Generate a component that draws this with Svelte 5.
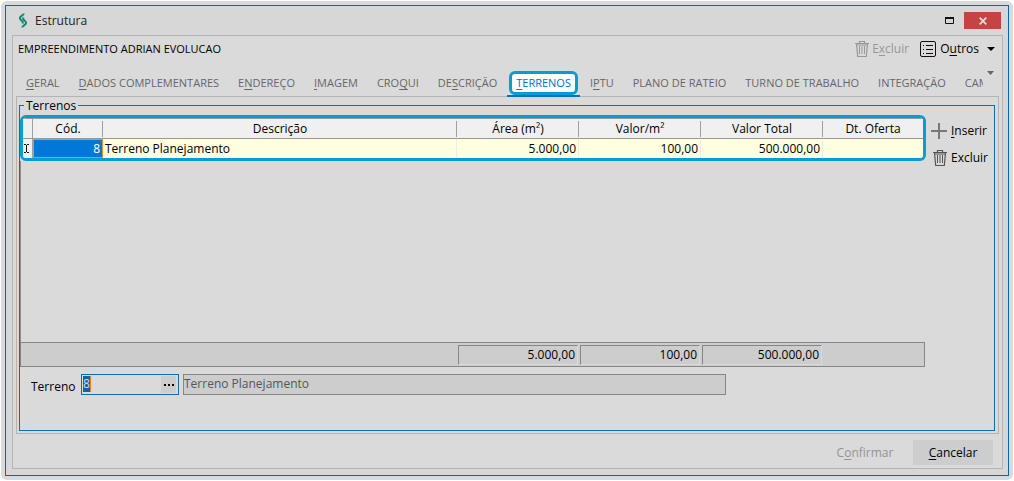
<script lang="ts">
    interface Tab {
        before?: string;
        key?: string;
        after: string;
    }

    const tabs: Tab[] = [
        {key: 'G', after: 'ERAL'},
        {key: 'D', after: 'ADOS COMPLEMENTARES'},
        {before: 'E', key: 'N', after: 'DEREÇO'},
        {key: 'I', after: 'MAGEM'},
        {before: 'CRO', key: 'Q', after: 'UI'},
        {before: 'DE', key: 'S', after: 'CRIÇÃO'},
        {key: 'T', after: 'ERRENOS'},
        {before: 'I', key: 'P', after: 'TU'},
        {after: 'PLANO DE RATEIO'},
        {after: 'TURNO DE TRABALHO'},
        {after: 'INTEGRAÇÃO'},
        {after: 'CAM'},
    ];

    let active = $state(6);
    let code = $state('8');

    const terrenos = [
        {
            cod: 8,
            descricao: 'Terreno Planejamento',
            area: '5.000,00',
            valor: '100,00',
            total: '500.000,00',
            oferta: '',
        },
    ];
    const totals = ['5.000,00', '100,00', '500.000,00'];
</script>

{#snippet trash()}
    <svg class="trash" width="14" height="18" viewBox="1 0 14 18" fill="none" stroke="currentColor" aria-hidden="true">
        <path d="M1 3.500h14M5.500 3.500v-2h5v2M2.500 4l1.200 12.500h8.600L13.500 4" stroke-width="1.200" />
        <path d="M5.500 6v8M8 6v8M10.500 6v8" />
        <path d="M3 5h10" />
    </svg>
{/snippet}

<div class="frame">
    <main class="window">
        <header class="titlebar">
            <svg class="logo" width="10" height="15" viewBox="0 0 10 15" fill="none" stroke="#0f8a74" stroke-width="2" aria-hidden="true">
                <path d="M5.800 0.500C5.600 2.500 1.800 3 1.900 5.200 2 7.400 5.200 7.400 5 10.500" />
                <path d="M4.200 14.500C4.400 12.500 8.200 12 8.100 9.800 8 7.600 4.800 7.600 5 4.500" />
            </svg>
            <h1>Estrutura</h1>
            <button class="maximize" aria-label="Maximizar">
                <svg width="10" height="8" viewBox="0 0 10 8" aria-hidden="true">
                    <path d="M0.500 0.500h8v6h-8z" fill="none" stroke="#111" />
                    <path d="M0 1h9" stroke="#111" stroke-width="2" />
                </svg>
            </button>
            <button class="close" aria-label="Fechar">
                <svg width="8" height="8" viewBox="0 0 8 8" aria-hidden="true">
                    <path d="M0.700 0.700l6.600 6.600M7.300 0.700l-6.600 6.600" stroke="#e6dada" stroke-width="1.800" />
                </svg>
            </button>
        </header>

        <div class="panel">
            <div class="toolbar">
                <h2>EMPREENDIMENTO ADRIAN EVOLUCAO</h2>
                <button class="tool" disabled>
                    {@render trash()}
                    <span>E<u>x</u>cluir</span>
                </button>
                <button class="tool">
                    <svg width="16" height="16" viewBox="0 0 16 16" fill="none" stroke="#111" aria-hidden="true">
                        <rect x="0.5" y="0.5" width="15" height="15" rx="1.5" />
                        <path d="M3 4.500h1M3 8.500h1M3 12.500h1M6 4.500h7M6 8.500h7M6 12.500h7" />
                    </svg>
                    <span>O<u>u</u>tros</span>
                    <svg class="caret" width="8" height="4" viewBox="0 0 8 4" aria-hidden="true"><path d="M0 0h8L4 4z" fill="#000" /></svg>
                </button>
            </div>

            <div class="tabbar">
                <div class="tabs" role="tablist">
                    {#each tabs as tab, i}
                        <button role="tab" class="tab" class:active={active === i} aria-selected={active === i} onclick={() => (active = i)}>
                            <span>{tab.before ?? ''}{#if tab.key}<u>{tab.key}</u>{/if}{tab.after}</span>
                        </button>
                    {/each}
                </div>
                <button class="more" aria-label="Mais abas">
                    <svg width="7" height="4" viewBox="0 0 7 4" aria-hidden="true"><path d="M0 0h7L3.500 4z" fill="#666" /></svg>
                </button>
            </div>

            <section class="page">
                <fieldset>
                    <legend>Terrenos</legend>
                    <div class="content">
                        <div class="grid">
                            <div class="highlight">
                                <table>
                                    <colgroup>
                                        <col class="mark" />
                                        <col class="code" />
                                        <col />
                                        <col class="num" />
                                        <col class="num" />
                                        <col class="num" />
                                        <col class="date" />
                                    </colgroup>
                                    <thead>
                                        <tr>
                                            <th class="full"></th>
                                            <th>Cód.</th>
                                            <th>Descrição</th>
                                            <th>Área (m²)</th>
                                            <th>Valor/m²</th>
                                            <th>Valor Total</th>
                                            <th>Dt. Oferta</th>
                                        </tr>
                                    </thead>
                                    <tbody>
                                        {#each terrenos as t}
                                            <tr>
                                                <td class="cursor">
                                                    <svg width="5" height="9" viewBox="0 0 5 9" aria-hidden="true">
                                                        <path d="M0 0.500h2M3 0.500h2M2.500 1v7M0 8.500h2M3 8.500h2" stroke="#111" fill="none" />
                                                    </svg>
                                                </td>
                                                <td class="right selected">{t.cod}</td>
                                                <td>{t.descricao}</td>
                                                <td class="right">{t.area}</td>
                                                <td class="right">{t.valor}</td>
                                                <td class="right">{t.total}</td>
                                                <td>{t.oferta}</td>
                                            </tr>
                                        {/each}
                                    </tbody>
                                </table>
                            </div>
                            <div class="empty"></div>
                            <div class="totals">
                                {#each totals as total}
                                    <output>{total}</output>
                                {/each}
                            </div>
                        </div>
                        <div class="actions">
                            <button class="tool">
                                <svg width="16" height="16" viewBox="0 0 16 16" aria-hidden="true"><path d="M0 8h16M8 0v16" stroke="#777" stroke-width="2" /></svg>
                                <span><u>I</u>nserir</span>
                            </button>
                            <button class="tool">
                                {@render trash()}
                                <span>Excluir</span>
                            </button>
                        </div>
                    </div>
                    <div class="form">
                        <label for="terreno">Terreno</label>
                        <div class="lookup">
                            <span class="value"><input id="terreno" bind:value={code} /></span>
                            <button aria-label="Pesquisar terreno">
                                <svg width="10" height="2" viewBox="0 0 10 2" aria-hidden="true"><path d="M0 0h2v2H0zM4 0h2v2H4zM8 0h2v2H8z" /></svg>
                            </button>
                        </div>
                        <input class="name" aria-label="Descrição do terreno" value="Terreno Planejamento" readonly />
                    </div>
                </fieldset>
            </section>

            <footer>
                <button disabled>C<u>o</u>nfirmar</button>
                <button class="cancel"><u>C</u>ancelar</button>
            </footer>
        </div>
    </main>
</div>

<style>
    :global(body) {
        background: #fff;
    }

    .frame,
    .frame * {
        box-sizing: border-box;
    }

    .frame {
        margin: 1px 1px 0;
        padding: 4px;
        border-radius: 6px;
        background: #dadada;
        color: #000;
        font-family: 'Open Sans', 'Noto Sans', sans-serif;
        font-size: 12px;
        line-height: 16px;
    }

    button,
    input {
        font: inherit;
        color: inherit;
        border: 0;
        padding: 0;
        margin: 0;
        background: none;
        border-radius: 0;
    }

    u {
        text-underline-offset: 2px;
    }

    h1,
    h2 {
        margin: 0;
        font-weight: 400;
    }

    .window {
        border: 1px solid #0a66b0;
        background: #d7d7d7;
    }

    /* Title bar */
    .titlebar {
        display: flex;
        align-items: center;
        height: 29px;
        padding: 0 7px 0 12px;
    }
    .titlebar h1 {
        flex: 1;
        margin-left: 7px;
        font-size: 12px;
        color: #222;
    }
    .maximize {
        display: flex;
        margin-right: 9px;
    }
    .close {
        display: flex;
        align-items: center;
        justify-content: center;
        width: 37px;
        height: 17px;
        background: #c64343;
    }

    .panel {
        margin: 0 5px 6px 6px;
        border: 1px solid #b4b4b4;
        background: #dadada;
    }

    .toolbar {
        display: flex;
        align-items: center;
        gap: 11px;
        height: 25px;
        padding: 0 7px 0 5px;
    }
    .toolbar h2 {
        flex: 1;
        font-size: 11px;
    }
    .tool {
        display: flex;
        align-items: center;
        gap: 4px;
        white-space: nowrap;
    }
    .tool svg {
        color: #555;
    }
    .tool:disabled {
        gap: 3px;
    }
    .tool:disabled,
    .tool:disabled svg {
        color: #979797;
    }
    .tool .caret {
        margin-left: 4px;
    }

    /* Tabs */
    .tabbar {
        display: flex;
        height: 36px;
        margin-bottom: -1px;
        position: relative;
    }
    .tabs {
        display: flex;
        flex: 1;
        gap: 1px;
        min-width: 0;
        padding-left: 4px;
        overflow: hidden;
        font-size: 11px;
    }
    .tab {
        flex: none;
        padding: 0 9px;
        border-bottom: 2px solid transparent;
        color: #666;
        white-space: nowrap;
    }
    .tab span {
        display: block;
        margin-top: 9px;
    }
    .tab.active {
        padding: 0 2px;
        border-color: #0072c9;
        color: #0072c9;
    }
    .tab.active span {
        padding: 1px 4px;
        border: 3px solid #049fd2;
        border-radius: 6px;
        background: #fff;
    }
    .more {
        display: flex;
        width: 19px;
        padding: 10px 0 0 4px;
    }

    .page {
        margin: 0 3px;
        padding: 0 3px 2px 2px;
        border: 1px solid #b4b4b4;
    }

    fieldset {
        min-width: 0;
        margin: 0;
        padding: 1px 0 35px;
        border: 1px solid #0a6cbd;
    }
    legend {
        margin-left: 4px;
        padding: 0 2px;
        line-height: 17px;
    }

    .content {
        display: flex;
    }
    .grid {
        flex: 1;
        min-width: 0;
    }
    .highlight {
        border: 3px solid #049fd2;
        border-radius: 6px;
        overflow: hidden;
    }

    table {
        width: 100%;
        table-layout: fixed;
        border-spacing: 0;
        border-top: 1px solid #999;
        background: #ffffe0;
    }
    .mark {
        width: 10px;
    }
    .code {
        width: 70px;
    }
    .num {
        width: 122px;
    }
    .date {
        width: 100px;
    }
    th {
        height: 20px;
        padding: 0;
        border-bottom: 1px solid #999;
        background: linear-gradient(#a0a0a0, #a0a0a0) right center / 1px 16px no-repeat #f0f0f0;
        font-weight: 400;
    }
    th.full {
        background-size: 1px 100%;
    }
    th:last-child {
        background: #f0f0f0;
    }
    td {
        height: 19px;
        padding: 0 2px;
        border-right: 1px solid #ececec;
        line-height: 16px;
    }
    td:last-child {
        border-right: 0;
    }
    .right {
        text-align: right;
    }
    .cursor {
        padding: 0 0 0 1px;
        background: #f0f0f0;
        border-color: #a0a0a0;
    }
    .cursor svg {
        display: block;
    }
    .selected {
        border: 1px solid #f08a2c;
        background: #0078d7;
        color: #fff;
    }

    .empty {
        height: 181px;
        border-left: 1px solid #909090;
    }

    .totals {
        display: flex;
        justify-content: flex-end;
        gap: 2px;
        height: 25px;
        margin-right: 1px;
        padding: 2px 102px 1px 0;
        border: 1px solid #868686;
        background: #cdcdcd;
    }
    .totals output {
        width: 120px;
        padding: 0 2px;
        border: 1px solid;
        border-color: #868686 #dadada #dadada #868686;
        line-height: 18px;
        text-align: right;
    }

    .actions {
        display: flex;
        flex-direction: column;
        gap: 10px;
        width: 68px;
        padding: 7px 0 0 5px;
    }
    .actions .tool {
        height: 17px;
    }
    .actions .trash {
        margin-left: 2px;
    }

    .form {
        display: flex;
        align-items: flex-start;
        margin-top: 7px;
        padding-left: 11px;
    }
    .form label {
        width: 50px;
        padding-top: 5px;
    }
    .lookup {
        display: flex;
        width: 98px;
        height: 21px;
        padding: 1px 2px 1px 1px;
        border: 1px solid #0a6cbd;
    }
    .value {
        flex: 1;
        min-width: 0;
    }
    .value input {
        display: block;
        width: 8px;
        height: 16px;
        border-right: 1px solid #f07a1c;
        background: #0a64b8;
        color: #dadada;
    }
    .lookup button {
        display: flex;
        align-items: center;
        justify-content: center;
        width: 15px;
        background: #cdcdcd;
    }
    .name {
        width: 543px;
        height: 21px;
        margin-left: 4px;
        padding: 0 1px 3px 0;
        border: 1px solid #868686;
        background: #cdcdcd;
        color: #555;
    }

    footer {
        display: flex;
        justify-content: flex-end;
        gap: 8px;
        padding: 6px 9px 3px;
    }
    footer button {
        width: 80px;
        height: 25px;
    }
    footer button:disabled {
        color: #939393;
    }
    footer .cancel {
        background: #cdcdcd;
    }
</style>
